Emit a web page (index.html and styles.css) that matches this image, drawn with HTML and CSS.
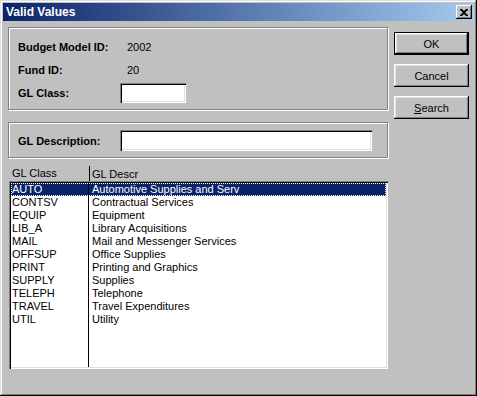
FILE: index.html
```html
<!DOCTYPE html>
<html lang="en">
  <head>
    <meta charset="UTF-8" />
    <title>Valid Values</title>
    <link rel="stylesheet" href="styles.css">
  </head>
  <body>
    <div class="window">
      <div class="titlebar">
        <span class="title">Valid Values</span>
        <span class="close-btn">
          <svg width="8" height="7" viewBox="0 0 8 7">
            <path d="M0 0h2l2 2 2-2h2v1L5 3.5 8 6v1H6L4 5 2 7H0V6l3-2.5L0 1z" fill="#000"/>
          </svg>
        </span>
      </div>

      <div class="content">
        <div class="left">
          <!-- header fields -->
          <div class="group group-top">
            <div class="field-row">
              <span class="label">Budget Model ID:</span>
              <span class="value">2002</span>
            </div>
            <div class="field-row">
              <span class="label">Fund ID:</span>
              <span class="value">20</span>
            </div>
            <div class="field-row">
              <span class="label">GL Class:</span>
              <span class="input input-short"></span>
            </div>
          </div>

          <!-- description filter -->
          <div class="group group-desc">
            <div class="field-row">
              <span class="label">GL Description:</span>
              <span class="input input-long"></span>
            </div>
          </div>

          <div class="list-header">
            <span class="col-class">GL Class</span>
            <span class="col-descr">GL Descr</span>
          </div>

          <div class="list">
            <div class="list-divider"></div>
            <div class="row selected"><span class="col-class">AUTO</span><span class="col-descr">Automotive Supplies and Serv</span></div>
            <div class="row"><span class="col-class">CONTSV</span><span class="col-descr">Contractual Services</span></div>
            <div class="row"><span class="col-class">EQUIP</span><span class="col-descr">Equipment</span></div>
            <div class="row"><span class="col-class">LIB_A</span><span class="col-descr">Library Acquisitions</span></div>
            <div class="row"><span class="col-class">MAIL</span><span class="col-descr">Mail and Messenger Services</span></div>
            <div class="row"><span class="col-class">OFFSUP</span><span class="col-descr">Office Supplies</span></div>
            <div class="row"><span class="col-class">PRINT</span><span class="col-descr">Printing and Graphics</span></div>
            <div class="row"><span class="col-class">SUPPLY</span><span class="col-descr">Supplies</span></div>
            <div class="row"><span class="col-class">TELEPH</span><span class="col-descr">Telephone</span></div>
            <div class="row"><span class="col-class">TRAVEL</span><span class="col-descr">Travel Expenditures</span></div>
            <div class="row"><span class="col-class">UTIL</span><span class="col-descr">Utility</span></div>
          </div>
        </div>

        <div class="buttons">
          <div class="btn btn-default"><span>OK</span></div>
          <div class="btn"><span>Cancel</span></div>
          <div class="btn"><span><u>S</u>earch</span></div>
        </div>
      </div>
    </div>
  </body>
</html>
```

FILE: styles.css
```css
body {
  margin: 0;
  font-family: "Liberation Sans", Arial, sans-serif;
  font-size: 11px;
  color: #000;
}

.window {
  width: 477px;
  height: 396px;
  box-sizing: border-box;
  padding: 3px;
  background: #c0c0c0;
  box-shadow: inset -1px -1px 0 #000, inset 1px 1px 0 #dfdfdf,
    inset -2px -2px 0 #808080, inset 2px 2px 0 #fff;
}

.titlebar {
  height: 18px;
  display: flex;
  align-items: center;
  justify-content: space-between;
  padding: 0 2px 0 3px;
  background: linear-gradient(to right, #0a246a, #a6caf0);
}

.title {
  color: #fff;
  font-weight: bold;
  font-size: 12px;
}

.close-btn {
  width: 16px;
  height: 14px;
  box-sizing: border-box;
  display: flex;
  align-items: center;
  justify-content: center;
  background: #c0c0c0;
  box-shadow: inset -1px -1px 0 #000, inset 1px 1px 0 #fff,
    inset -2px -2px 0 #808080;
}

.content {
  display: flex;
  padding: 6px 0 0 5px;
}

.left {
  width: 380px;
}

.group {
  border: 1px solid #808080;
  box-shadow: 1px 1px 0 #fff, inset 1px 1px 0 #fff;
  box-sizing: border-box;
  padding-left: 9px;
}

.group-top {
  height: 83px;
  padding-top: 7px;
}

.group-desc {
  height: 36px;
  margin-top: 12px;
  padding-top: 6px;
}

.field-row {
  display: flex;
  align-items: center;
  height: 23px;
}

.label {
  width: 102px;
  font-weight: bold;
}

.value {
  padding-left: 7px;
}

.input {
  display: block;
  height: 20px;
  box-sizing: border-box;
  background: #fff;
  box-shadow: inset 1px 1px 0 #808080, inset 2px 2px 0 #000,
    inset -1px -1px 0 #fff, inset -2px -2px 0 #dfdfdf;
}

.input-short {
  width: 66px;
}

.input-long {
  width: 252px;
  height: 21px;
}

.list-header {
  display: flex;
  height: 15px;
  align-items: center;
  margin-top: 8px;
  padding-left: 4px;
}

.list-header .col-class {
  width: 77px;
  height: 15px;
  line-height: 15px;
  border-right: 1px solid #000;
}

.list-header .col-descr {
  padding-left: 2px;
}

.list {
  position: relative;
  height: 188px;
  margin-left: 1px;
  box-sizing: border-box;
  padding: 2px;
  background: #fff;
  box-shadow: inset 1px 1px 0 #808080, inset 2px 2px 0 #000,
    inset -1px -1px 0 #fff, inset -2px -2px 0 #dfdfdf;
}

.list-divider {
  position: absolute;
  left: 79px;
  top: 2px;
  bottom: 2px;
  width: 1px;
  background: #000;
}

.row {
  display: flex;
  height: 13px;
  line-height: 13px;
  padding-left: 1px;
}

.row .col-class {
  width: 80px;
}

.row.selected {
  background: #0a246a;
  color: #fff;
  outline: 1px dotted #fff;
  outline-offset: -1px;
}

.buttons {
  display: flex;
  flex-direction: column;
  gap: 9px;
  margin-left: 6px;
  padding-top: 5px;
}

.btn {
  width: 75px;
  height: 23px;
  box-sizing: border-box;
  display: flex;
  align-items: center;
  justify-content: center;
  background: #c0c0c0;
  box-shadow: inset -1px -1px 0 #000, inset 1px 1px 0 #fff,
    inset -2px -2px 0 #808080, inset 2px 2px 0 #dfdfdf;
}

.btn-default {
  border: 1px solid #000;
}
```
